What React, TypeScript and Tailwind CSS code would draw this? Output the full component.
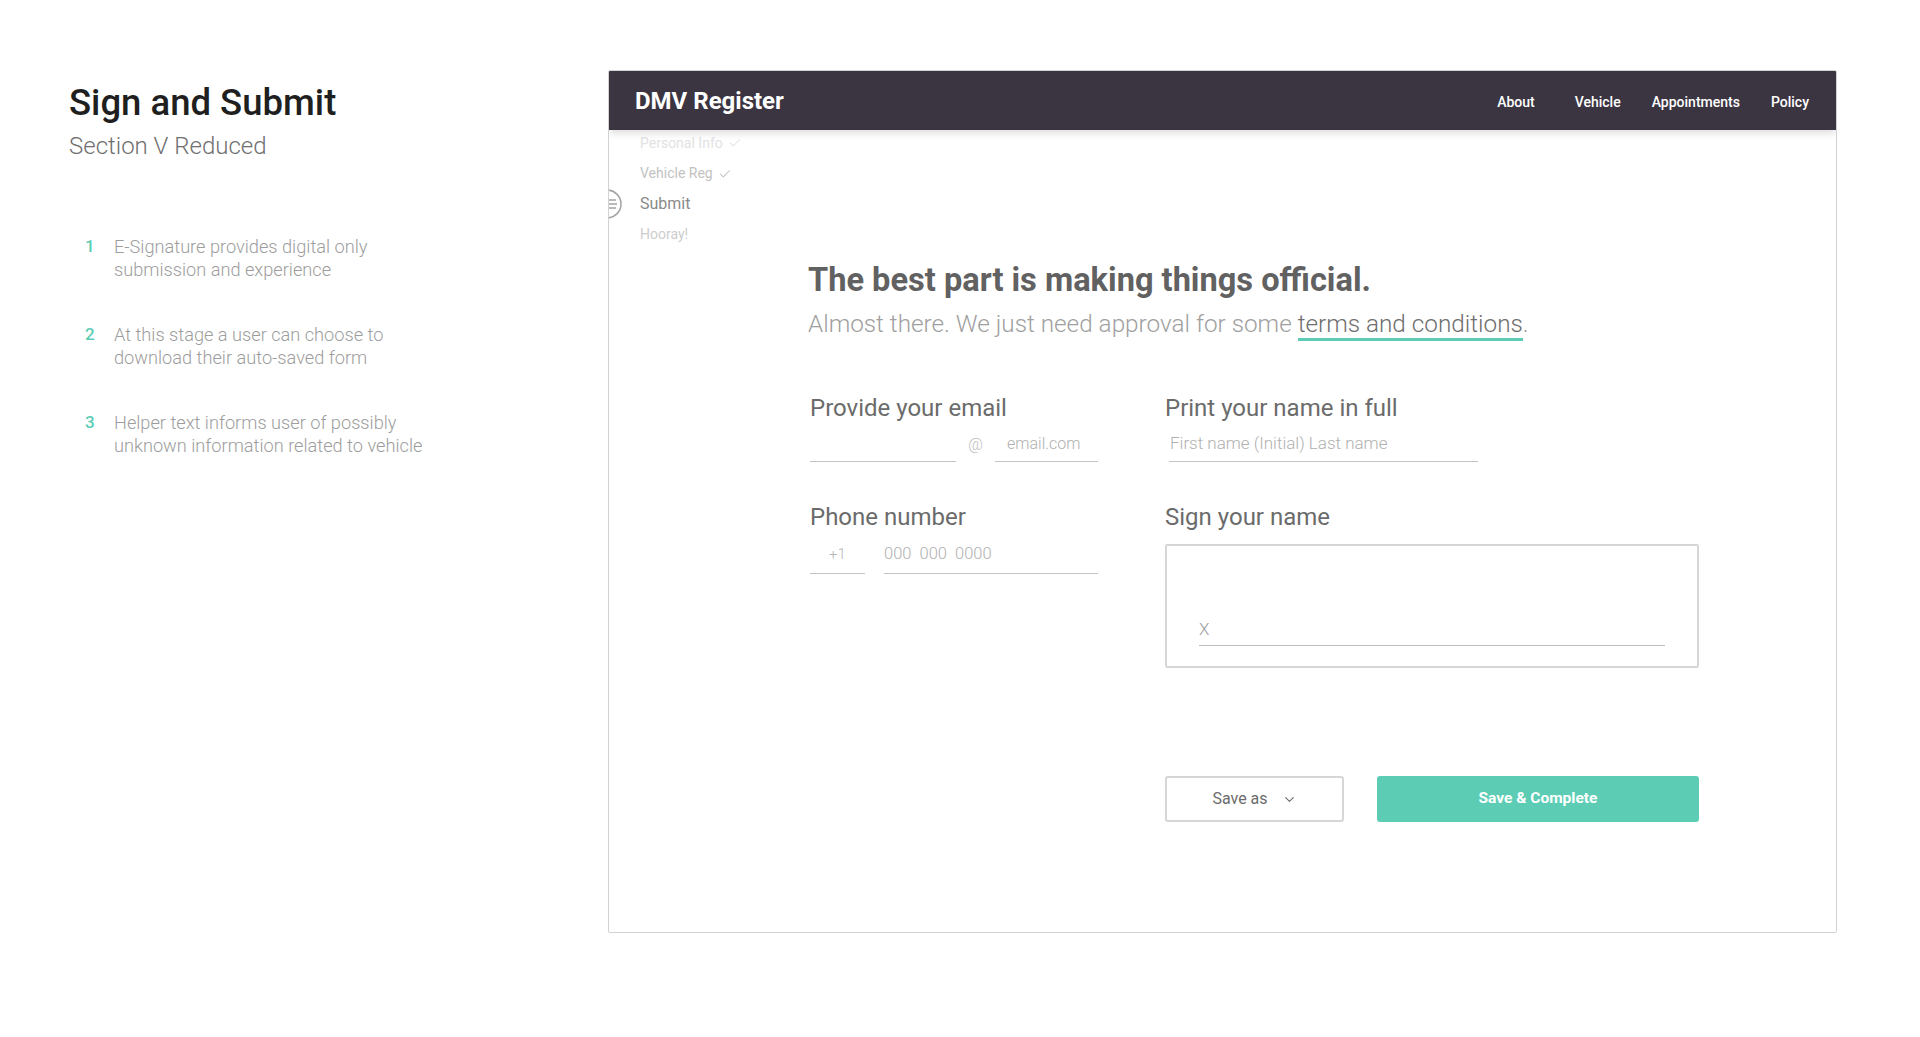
import { Check, ChevronDown } from 'lucide-react';

const notes = [
  ['E-Signature provides digital only', 'submission and experience'],
  ['At this stage a user can choose to', 'download their auto-saved form'],
  ['Helper text informs user of possibly', 'unknown information related to vehicle'],
];

const steps = [
  { label: 'Personal Info', done: true, tone: 'text-[#e2e2e2]' },
  { label: 'Vehicle Reg', done: true, tone: 'text-[#c2c2c2]' },
  { label: 'Submit', active: true, tone: 'text-[#8a8a8a]' },
  { label: 'Hooray!', tone: 'text-[#cdcdcd]' },
];

function StepIcon() {
  return (
    <svg width="30" height="30" viewBox="0 0 30 30" className="absolute left-[-48px] top-1/2 -translate-y-1/2" fill="none" stroke="#a3a3a3" strokeWidth="1.5">
      <circle cx="15" cy="15" r="14" />
      <line x1="6" y1="11" x2="24" y2="11" />
      <line x1="6" y1="15" x2="25" y2="15" />
      <line x1="6" y1="19" x2="24" y2="19" />
    </svg>
  );
}

export default function App() {
  return (
    <div className="w-[1920px] h-[1037px] bg-white flex font-['Roboto',sans-serif]">
      {/* Notes column */}
      <div className="w-[608px] shrink-0 pl-[69px] pt-[81px]">
        <h1 className="text-[36.5px] leading-[44px] font-medium text-[#1f1f1f]">Sign and Submit</h1>
        <p className="mt-[6px] text-[24px] leading-[30px] font-light text-[#6f6f6f]">Section V Reduced</p>
        <ul className="mt-[74px] pl-[16px] flex flex-col gap-[42px]">
          {notes.map((lines, i) => (
            <li key={i} className="flex text-[18.2px] leading-[23px]">
              <span className="w-[29px] shrink-0 text-[17px] font-medium text-[#5ccdb4]">{i + 1}</span>
              <span className="font-light text-[#9d9d9d]">
                {lines[0]}
                <br />
                {lines[1]}
              </span>
            </li>
          ))}
        </ul>
      </div>

      {/* Form card */}
      <div className="mt-[70px] w-[1229px] h-[863px] border border-[#d2d2d2] rounded-[2px] overflow-hidden flex flex-col">
        <header className="relative z-10 h-[59px] shrink-0 bg-[#3b3541] flex items-center pl-[26px] pr-[27px] shadow-[0_3px_8px_rgba(0,0,0,0.14)]">
          <span className="text-[24px] font-bold text-white">DMV Register</span>
          <nav className="ml-auto mt-[3px] flex items-center gap-[31px] text-[14px] font-medium text-white">
            <a className="mr-[9px] ml-[4px]">About</a>
            <a>Vehicle</a>
            <a>Appointments</a>
            <a>Policy</a>
          </nav>
        </header>

        <div className="flex flex-1">
          {/* Stepper */}
          <div className="w-[199px] shrink-0 pl-[31px] -mt-[2px]">
            {steps.map((s) => (
              <div key={s.label} className={`relative h-[30.5px] flex items-center gap-[5px] ${s.tone} ${s.active ? 'text-[16px]' : 'text-[14px]'}`}>
                {s.active && <StepIcon />}
                <span>{s.label}</span>
                {s.done && <Check size={14} strokeWidth={1.75} />}
              </div>
            ))}
          </div>

          {/* Main */}
          <div className="flex-1 pt-[130px]">
            <h2 className="text-[32.6px] leading-[40px] font-bold text-[#616161]">The best part is making things official.</h2>
            <p className="mt-[9px] text-[24.3px] leading-[30px] font-light text-[#a0a0a0]">
              Almost there. We just need approval for some{' '}
              <span className="text-[#6e6e6e] border-b-[3px] border-[#5ccdb4]">terms and conditions</span>.
            </p>

            <div className="mt-[54px] pl-[2px] flex gap-[65px]">
              {/* Left fields */}
              <div className="w-[290px] flex flex-col">
                <label className="text-[24px] leading-[30px] text-[#6b6b6b]">Provide your email</label>
                <div className="flex h-[39px]">
                  <div className="w-[146px] border-b-[1.5px] border-[#c4c4c4]" />
                  <div className="w-[39px] flex items-center justify-center pt-[4px] text-[16px] font-light text-[#bdbdbd]">@</div>
                  <div className="w-[103px] border-b-[1.5px] border-[#c4c4c4] flex items-center pt-[4px] pl-[12px] text-[16px] font-light text-[#b0b0b0]">email.com</div>
                </div>

                <label className="mt-[40px] text-[24px] leading-[30px] text-[#6b6b6b]">Phone number</label>
                <div className="flex h-[42px] gap-[19px]">
                  <div className="w-[55px] border-b-[1.5px] border-[#c4c4c4] flex items-center justify-center pt-[4px] text-[15px] font-light text-[#b5b5b5]">+1</div>
                  <div className="w-[214px] border-b-[1.5px] border-[#c4c4c4] flex items-center pt-[4px] text-[16.5px] font-light text-[#b0b0b0] whitespace-pre">000  000  0000</div>
                </div>
              </div>

              {/* Right fields */}
              <div className="w-[534px] flex flex-col">
                <label className="text-[24px] leading-[30px] text-[#6b6b6b]">Print your name in full</label>
                <div className="ml-[4px] w-[309px] h-[39px] border-b-[1.5px] border-[#c4c4c4] flex items-center pt-[4px] pl-[1px] text-[17px] font-light text-[#b0b0b0]">
                  First name (Initial) Last name
                </div>

                <label className="mt-[40px] text-[24px] leading-[30px] text-[#6b6b6b]">Sign your name</label>
                <div className="mt-[12px] h-[124px] border-2 border-[#d6d6d6] rounded-[2px] flex items-end px-[32px] pb-[20px]">
                  <div className="flex-1 border-b-[1.5px] border-[#bdbdbd] pb-[6px] text-[17px] leading-[20px] font-light text-[#9e9e9e]">X</div>
                </div>

                <div className="mt-[108px] flex gap-[33px]">
                  <button className="w-[179px] h-[46px] border-2 border-[#d6d6d6] rounded-[3px] flex items-center justify-center gap-[14px] text-[16px] text-[#6b6b6b]">
                    Save as
                    <ChevronDown size={15} strokeWidth={1.75} />
                  </button>
                  <button className="w-[322px] h-[46px] bg-[#5ccdb4] rounded-[3px] text-[15.5px] font-bold text-white">Save &amp; Complete</button>
                </div>
              </div>
            </div>
          </div>
        </div>
      </div>
    </div>
  );
}
